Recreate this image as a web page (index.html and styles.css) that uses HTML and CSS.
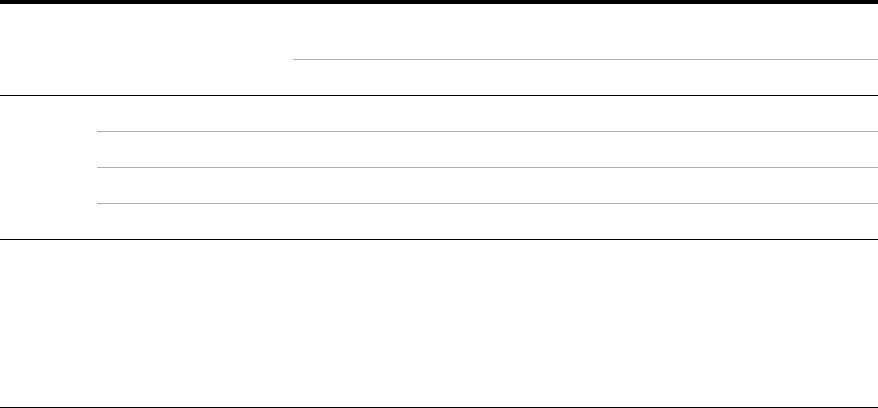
FILE: index.html
```html
<!DOCTYPE html>
<html>
<head>
<meta charset="utf-8">
<link rel="stylesheet" href="styles.css">
</head>
<body>
<div class="table">
  <div class="thead">
    <div class="th-left"></div>
    <div class="th-right">
      <div class="th-group"></div>
      <div class="th-sub"></div>
    </div>
  </div>
  <div class="tbody">
    <div class="rowhead"></div>
    <div class="rows">
      <div class="row"></div>
      <div class="row"></div>
      <div class="row"></div>
      <div class="row last"></div>
    </div>
  </div>
  <div class="tfoot"></div>
</div>
</body>
</html>
```
FILE: styles.css
```css
html, body {
  margin: 0;
  padding: 0;
  background: #fff;
  font-family: "Liberation Sans", Arial, sans-serif;
}
.table {
  width: 878px;
  border-top: 4px solid #000;
}
.thead {
  display: grid;
  grid-template-columns: 293px 1fr;
  border-bottom: 1px solid #000;
}
.th-right {
  display: flex;
  flex-direction: column;
}
.th-group {
  height: 55px;
  border-bottom: 1px solid #b0b0b0;
}
.th-sub {
  height: 35px;
}
.tbody {
  display: grid;
  grid-template-columns: 97px 1fr;
  border-bottom: 1px solid #000;
}
.rows {
  display: flex;
  flex-direction: column;
}
.row {
  height: 35px;
  border-bottom: 1px solid #b0b0b0;
}
.row.last {
  height: 35px;
  border-bottom: none;
}
.tfoot {
  height: 167px;
  border-bottom: 1px solid #000;
}
```
